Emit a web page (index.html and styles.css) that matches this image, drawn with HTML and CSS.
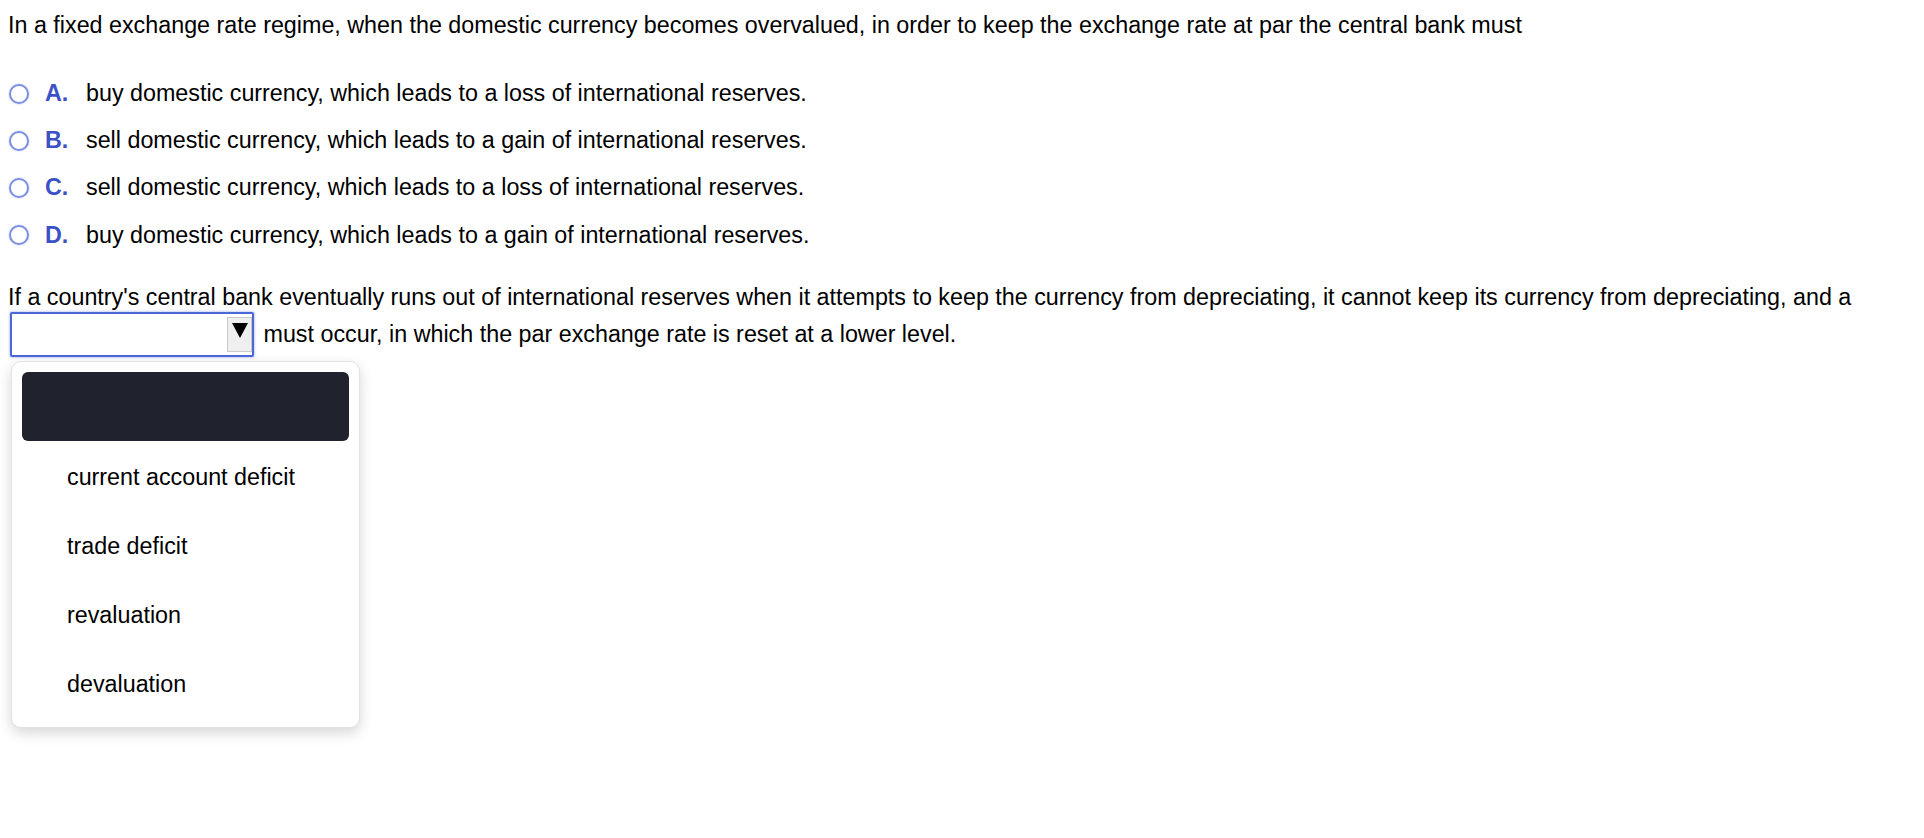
FILE: index.html
```html
<!DOCTYPE html>
<html lang="en">
<head>
<meta charset="utf-8">
<title>Question</title>
<link rel="stylesheet" href="styles.css">
</head>
<body>
<div class="page">
  <p class="stem">In a fixed exchange rate regime, when the domestic currency becomes overvalued, in order to keep the exchange rate at par the central bank must</p>
  <ul class="choices">
    <li class="choice"><span class="radio"></span><span class="letter">A.</span><span class="text">buy domestic currency, which leads to a loss of international reserves.</span></li>
    <li class="choice"><span class="radio"></span><span class="letter">B.</span><span class="text">sell domestic currency, which leads to a gain of international reserves.</span></li>
    <li class="choice"><span class="radio"></span><span class="letter">C.</span><span class="text">sell domestic currency, which leads to a loss of international reserves.</span></li>
    <li class="choice"><span class="radio"></span><span class="letter">D.</span><span class="text">buy domestic currency, which leads to a gain of international reserves.</span></li>
  </ul>
  <p class="fill">If a country's central bank eventually runs out of international reserves when it attempts to keep the currency from depreciating, it cannot keep its currency from depreciating, and a <span class="select"><span class="select-btn"><svg class="arrow" viewBox="0 0 16 15" width="16" height="15"><polygon points="0,0 16,0 8,15" fill="#000"/></svg></span></span> must occur, in which the par exchange rate is reset at a lower level.</p>
  <div class="menu">
    <div class="menu-item selected"></div>
    <div class="menu-item">current account deficit</div>
    <div class="menu-item">trade deficit</div>
    <div class="menu-item">revaluation</div>
    <div class="menu-item">devaluation</div>
  </div>
</div>
</body>
</html>
```

FILE: styles.css
```css
html, body {
  margin: 0;
  padding: 0;
  background: #fff;
}
body {
  font-family: "Liberation Sans", Arial, sans-serif;
  font-size: 23.3px;
  color: #000;
  min-height: 838px;
}
.page {
  position: relative;
  min-height: 825px;
  padding: 13px 8px 0 8px;
}
.stem {
  margin: 0;
  line-height: 24px;
}
.choices {
  list-style: none;
  margin: 33px 0 0 0;
  padding: 0;
}
.choice {
  display: flex;
  align-items: center;
  height: 47.2px;
  line-height: 47.2px;
}
.radio {
  box-sizing: border-box;
  width: 20px;
  height: 20px;
  margin-left: 1px;
  border: 2px solid #7a8ee2;
  border-radius: 50%;
  box-shadow: 0 0 2px rgba(110, 130, 220, 0.5);
  flex: none;
}
.letter {
  margin-left: 16px;
  width: 41px;
  font-weight: bold;
  color: #3c51c6;
  flex: none;
}
.fill {
  margin: 23.3px 0 0 0;
  line-height: 30px;
}
.select {
  display: inline-block;
  box-sizing: border-box;
  width: 244px;
  height: 45px;
  margin-left: 2px;
  margin-right: 3px;
  padding-top: 3px;
  border: 2px solid #4a68d8;
  border-radius: 2px;
  box-shadow: 0 0 3px rgba(74, 104, 216, 0.6);
  vertical-align: -15px;
  overflow: hidden;
  background: #fff;
}
.select-btn {
  float: right;
  box-sizing: border-box;
  width: 25px;
  height: 35px;
  background: #efefef;
  border: 1px solid #c9c9c9;
  display: flex;
  align-items: flex-start;
  justify-content: center;
  padding-top: 5px;
}
.arrow {
  display: block;
}
.menu {
  position: absolute;
  left: 11px;
  top: 361px;
  box-sizing: border-box;
  width: 349px;
  padding: 10px;
  background: #fff;
  border: 1px solid #e2e2e2;
  border-radius: 10px;
  box-shadow: 0 5px 14px rgba(0, 0, 0, 0.16);
}
.menu-item {
  box-sizing: border-box;
  height: 69px;
  padding: 3px 0 0 45px;
  line-height: 66px;
}
.menu-item.selected {
  background: #20232d;
  border-radius: 6px;
}
```
